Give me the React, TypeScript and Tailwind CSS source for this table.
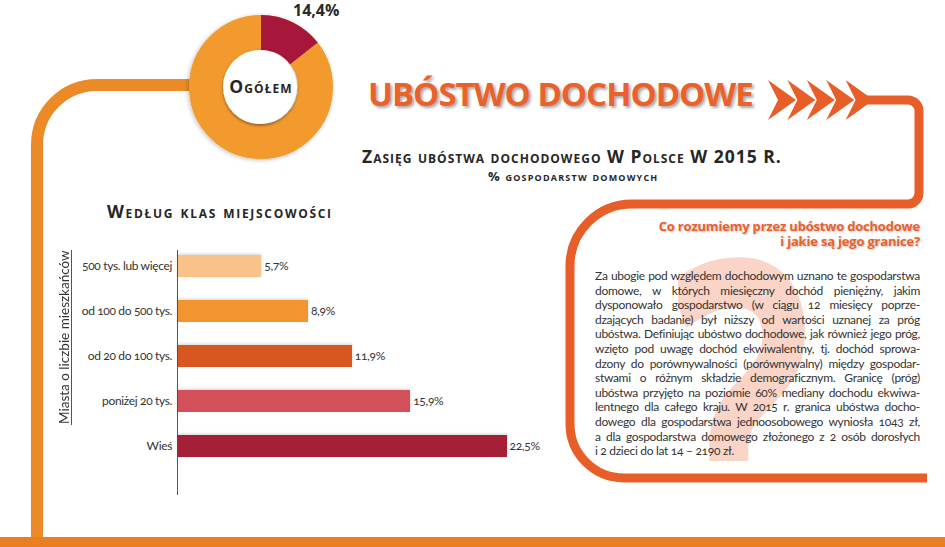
const bars = [
  { label: "500 tys. lub więcej", value: 5.7, text: "5,7%", color: "bg-[#F8C28A]" },
  { label: "od 100 do 500 tys.", value: 8.9, text: "8,9%", color: "bg-[#F29531]" },
  { label: "od 20 do 100 tys.", value: 11.9, text: "11,9%", color: "bg-[#D8561F]" },
  { label: "poniżej 20 tys.", value: 15.9, text: "15,9%", color: "bg-[#D3505A]" },
  { label: "Wieś", value: 22.5, text: "22,5%", color: "bg-[#A51F37]" },
];

const PX_PER_PCT = 14.6;

const lines = [
  "Za ubogie pod względem dochodowym uznano te gospodarstwa",
  "domowe, w których miesięczny dochód pieniężny, jakim",
  "dysponowało gospodarstwo (w ciągu 12 miesięcy poprze-",
  "dzających badanie) był niższy od wartości uznanej za próg",
  "ubóstwa. Definiując ubóstwo dochodowe, jak również jego próg,",
  "wzięto pod uwagę dochód ekwiwalentny, tj. dochód sprowa-",
  "dzony do porównywalności (porównywalny) między gospodar-",
  "stwami o różnym składzie demograficznym. Granicę (próg)",
  "ubóstwa przyjęto na poziomie 60% mediany dochodu ekwiwa-",
  "lentnego dla całego kraju. W 2015 r. granica ubóstwa docho-",
  "dowego dla gospodarstwa jednoosobowego wyniosła 1043 zł,",
  "a dla gospodarstwa domowego złożonego z 2 osób dorosłych",
];

const Connectors = () => (
  <svg className="absolute inset-0 pointer-events-none" width="945" height="547" viewBox="0 0 945 547">
    <path d="M37 540 V145 A60 60 0 0 1 97 85 H210" fill="none" stroke="#EC8A28" strokeWidth="12" />
    <path
      d="M864 100 H908 A11 11 0 0 1 919 111 V193 A11 11 0 0 1 908 204 H632 A62 62 0 0 0 570 266 V424 A54 54 0 0 0 624 478 H927"
      fill="none"
      stroke="#E85E29"
      strokeWidth="9"
    />
  </svg>
);

const Donut = () => {
  const r = 54.5;
  const c = 2 * Math.PI * r;
  return (
    <div className="relative w-[144px] shrink-0 pt-[15px]">
      <svg width="144" height="144" viewBox="0 0 144 144" className="overflow-visible">
        <defs>
          <filter id="ring-shadow" x="-20%" y="-20%" width="140%" height="140%">
            <feDropShadow dx="-1" dy="1" stdDeviation="2" floodColor="#000" floodOpacity="0.25" />
          </filter>
          <filter id="hole-shadow" x="-30%" y="-30%" width="160%" height="160%">
            <feDropShadow dx="0" dy="1.5" stdDeviation="1.5" floodColor="#000" floodOpacity="0.45" />
          </filter>
        </defs>
        <g filter="url(#ring-shadow)">
          <circle cx="72" cy="72" r={r} fill="none" stroke="#F39A2F" strokeWidth="35" />
          <circle
            cx="72"
            cy="72"
            r={r}
            fill="none"
            stroke="#A7123B"
            strokeWidth="35"
            strokeDasharray={`${c * 0.144} ${c}`}
            transform="rotate(-90 72 72)"
          />
        </g>
        <circle cx="71" cy="72" r="37" fill="#fff" filter="url(#hole-shadow)" />
      </svg>
      <div className="absolute left-0 right-0 top-[15px] h-[144px] flex items-center justify-center">
        <span className="font-['Open_Sans',sans-serif] font-bold text-[17.5px] leading-none tracking-[1.1px] text-[#262626] [font-variant:small-caps]">
          Ogółem
        </span>
      </div>
      <span className="absolute left-[104px] top-[2px] font-['Open_Sans',sans-serif] font-bold text-[16px] leading-[16px] text-[#2a2a2a]">
        14,4%
      </span>
    </div>
  );
};

const Chevrons = ({ className }: { className?: string }) => (
  <svg width="106" height="40" viewBox="0 0 106 40" className={className}>
    {[0, 1, 2, 3, 4].map((i) => {
      const x = i * 19.4;
      return <polygon key={i} points={`${x},0 ${x + 28},20 ${x},40 ${x + 10},20`} fill="#E85E29" />;
    })}
  </svg>
);

const Chart = () => (
  <div className="mt-[29px] flex items-start font-['Lato',sans-serif] text-[#333] oldstyle-nums">
    <div className="w-[16px] shrink-0">
      <div className="h-[175px] [writing-mode:vertical-rl] rotate-180 border-l border-[#555] text-center text-[13.5px] leading-[14px] whitespace-nowrap">
        Miasta o liczbie mieszkańców
      </div>
    </div>
    <div className="w-[104px] shrink-0 flex flex-col items-end gap-[23px] pt-[5px] pr-[5px]">
      {bars.map((b) => (
        <div key={b.label} className="h-[22px] flex items-center text-[12px] tracking-[-0.35px] whitespace-nowrap">
          {b.label}
        </div>
      ))}
    </div>
    <div className="flex flex-col gap-[23px] pt-[5px] pb-[38px] border-l border-[#555]">
      {bars.map((b) => (
        <div key={b.label} className="h-[22px] flex items-center">
          <div
            className={`h-full ${b.color} shadow-[0_-1px_3px_rgba(0,0,0,0.18)]`}
            style={{ width: b.value * PX_PER_PCT }}
          />
          <span className="ml-[3px] text-[12px] tracking-[-0.3px] leading-none">{b.text}</span>
        </div>
      ))}
    </div>
  </div>
);

export default function App() {
  return (
    <div className="relative w-[945px] h-[547px] overflow-hidden bg-white flex flex-col text-[#2d2d2d]">
      <Connectors />

      <header className="relative flex h-[190px] shrink-0">
        <div className="w-[189px] shrink-0" />
        <Donut />
        <div className="ml-[35px] pt-[77px] flex flex-col">
          <div className="flex items-start">
            <h1 className="font-['Open_Sans',sans-serif] font-bold text-[33px] leading-[34px] tracking-[-1px] text-[#E9622B] [text-shadow:2px_2px_3px_rgba(0,0,0,0.35)] whitespace-nowrap">
              UBÓSTWO DOCHODOWE
            </h1>
            <Chevrons className="ml-[15px] mt-[3px]" />
          </div>
          <h2 className="mt-[26px] -ml-[6px] font-['Open_Sans',sans-serif] font-bold text-[17.5px] leading-[20px] tracking-[1px] text-[#262626] [font-variant:small-caps] oldstyle-nums whitespace-nowrap">
            Zasięg ubóstwa dochodowego W Polsce W 2015 R.
          </h2>
          <p className="mt-[2px] ml-[120px] font-['Open_Sans',sans-serif] font-bold text-[13px] leading-[16px] tracking-[1.2px] text-[#262626] [font-variant:small-caps] whitespace-nowrap">
            % gospodarstw domowych
          </p>
        </div>
      </header>

      <main className="relative flex flex-1">
        <section className="w-[595px] shrink-0 pl-[57px] pt-[11px]">
          <h3 className="ml-[50px] font-['Open_Sans',sans-serif] font-bold text-[17.5px] leading-[20px] tracking-[1.7px] text-[#262626] [font-variant:small-caps] whitespace-nowrap">
            Według klas miejscowości
          </h3>
          <Chart />
        </section>

        <section className="relative w-[350px] pr-[25px] pt-[29px]">
          <div aria-hidden="true" className="absolute left-[83px] top-[55px] w-[160px] h-[216px] overflow-hidden select-none">
            <span className="absolute left-[-9px] top-[-56px] block origin-top scale-y-[1.4] font-['Open_Sans',sans-serif] font-bold text-[300px] leading-none text-[#FAD4C6]">
              ?
            </span>
          </div>
          <h3 className="relative text-right font-['Open_Sans',sans-serif] font-bold text-[13px] leading-[15px] tracking-[-0.2px] text-[#E9622B] [text-shadow:1px_1px_2px_rgba(0,0,0,0.25)]">
            Co rozumiemy przez ubóstwo dochodowe
            <br />i jakie są jego granice?
          </h3>
          <div className="relative mt-[20px] font-['Lato',sans-serif] text-[12px] leading-[14.6px] tracking-[-0.3px] text-[#333] oldstyle-nums">
            {lines.map((l) => (
              <div key={l} className="text-justify [text-align-last:justify]">
                {l}
              </div>
            ))}
            <div>i 2 dzieci do lat 14 – 2190 zł.</div>
          </div>
        </section>
      </main>

      <div className="relative h-[10px] shrink-0 bg-[#E8801F]" />
    </div>
  );
}
